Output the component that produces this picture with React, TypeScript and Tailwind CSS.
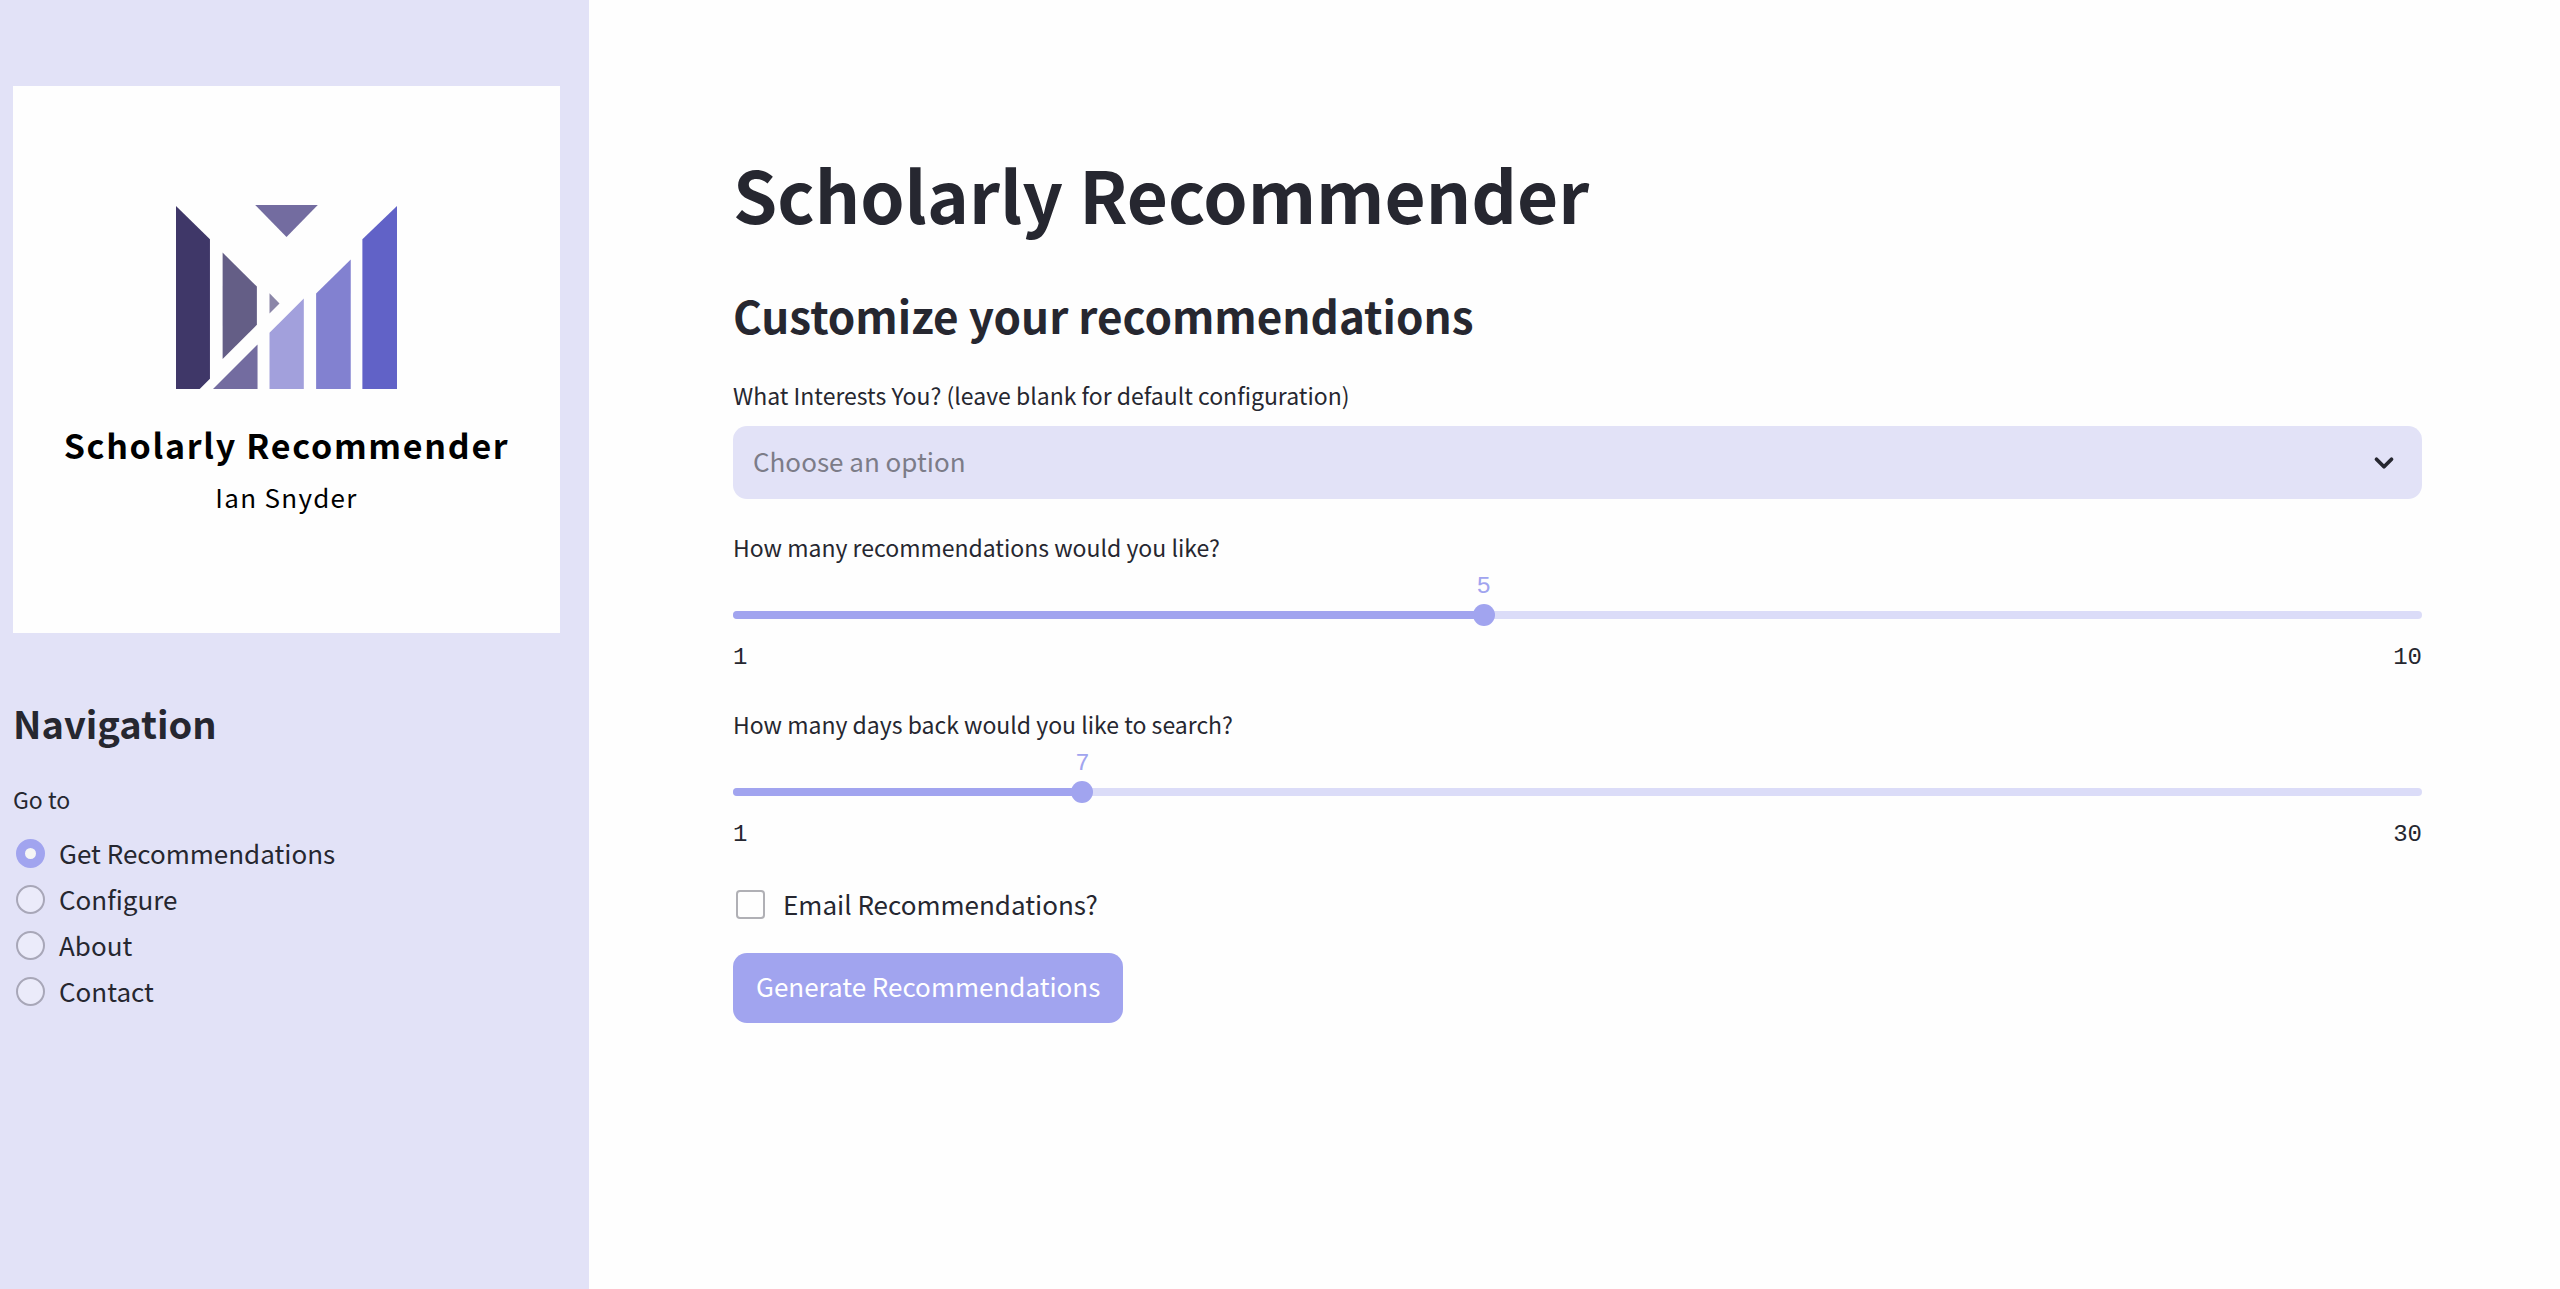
import { useState } from 'react';
import { Check, ChevronDown } from 'lucide-react';

const pages = ['Get Recommendations', 'Configure', 'About', 'Contact'];
const interests = ['Computer Science', 'Mathematics', 'Physics', 'Statistics'];

const Logo = () => (
    <div className="flex aspect-square flex-col items-center bg-[#fefefe] pt-[119px]">
        <svg viewBox="47 45 664 554" className="w-[221px]" role="img" aria-label="Logo">
            <polygon points="47,48 149,148 149,567 117,599 47,599" fill="#3f3768" />
            <polygon points="285,45 473,45 379,141" fill="#736ca0" />
            <polygon points="187,188 290,290 290,405 187,508" fill="#645e86" />
            <polygon points="328,310 358,341 328,371" fill="#8b86a8" />
            <polygon points="157,599 292,464 292,599" fill="#736ca0" />
            <polygon points="328,429 431,326 431,599 328,599" fill="#a2a0dc" />
            <polygon points="468,311 572,209 572,599 468,599" fill="#8281d0" />
            <polygon points="607,148 711,48 711,599 607,599" fill="#6162c7" />
        </svg>
        <p className="mt-8 text-[34px] leading-[48px] font-bold tracking-wider whitespace-nowrap text-black">
            Scholarly Recommender
        </p>
        <p className="mt-1 text-[26px] leading-[48px] tracking-wider text-black">Ian Snyder</p>
    </div>
);

type SliderFieldProps = {
    id: string;
    label: string;
    min: number;
    max: number;
    initial: number;
};

const SliderField = ({ id, label, min, max, initial }: SliderFieldProps) => {
    const [value, setValue] = useState(initial);
    const percent = `${((value - min) / (max - min)) * 100}%`;

    return (
        <div className="flex flex-col">
            <label htmlFor={id} className="text-[23px] leading-8">{label}</label>
            <div className="mt-2 flex font-['Liberation_Mono',monospace] text-2xl leading-8 text-[#a1a4ef]">
                <div style={{ width: percent }} />
                <output htmlFor={id} className="-translate-x-1/2">{value}</output>
            </div>
            <div className="relative mt-px flex h-[22px] items-center">
                <div className="h-2 w-full overflow-hidden rounded-full bg-[#dbdcf8]">
                    <div className="h-full bg-[#a1a4ef]" style={{ width: percent }} />
                </div>
                {/* the input is one thumb wider than the track so the thumb centre sits on the value */}
                <input
                    id={id}
                    type="range"
                    min={min}
                    max={max}
                    value={value}
                    onChange={(e) => setValue(Number(e.target.value))}
                    className="absolute inset-y-0 -left-[11px] m-0 w-[calc(100%+22px)] cursor-pointer appearance-none bg-transparent [&::-webkit-slider-thumb]:size-[22px] [&::-webkit-slider-thumb]:appearance-none [&::-webkit-slider-thumb]:rounded-full [&::-webkit-slider-thumb]:bg-[#a1a4ef]"
                />
            </div>
            <div className="mt-4 flex justify-between font-['Liberation_Mono',monospace] text-2xl leading-8">
                <span>{min}</span>
                <span>{max}</span>
            </div>
        </div>
    );
};

export default function App() {
    const [page, setPage] = useState(pages[0]);
    const [interest, setInterest] = useState('');
    const [sendEmail, setSendEmail] = useState(false);

    return (
        <div className="flex min-h-screen bg-[#fefefe] font-['Noto_Sans_CJK_SC',sans-serif] text-[#262730]">
            <aside className="w-[589px] shrink-0 bg-[#e2e2f7] pt-[86px] pr-[29px] pl-[13px]">
                <Logo />
                <h2 className="mt-[62px] text-[38px] leading-[56px] font-bold">Navigation</h2>
                <fieldset className="mt-8">
                    <legend className="text-[23px] leading-8">Go to</legend>
                    <div className="mt-[15px] flex flex-col">
                        {pages.map((name) => (
                            <label key={name} className="flex h-[46px] items-center gap-[14px] pl-[3px] text-[26px] leading-8">
                                <input
                                    type="radio"
                                    name="page"
                                    checked={page === name}
                                    onChange={() => setPage(name)}
                                    className="size-[29px] shrink-0 appearance-none rounded-full border-2 border-[#a8a7b8] bg-[#ebebfa] checked:border-9 checked:border-[#a1a4ef] checked:bg-[#f5f5f5]"
                                />
                                {name}
                            </label>
                        ))}
                    </div>
                </fieldset>
            </aside>

            <main className="flex min-w-0 flex-1 flex-col pt-[149px] pr-[138px] pl-36">
                <h1 className="text-[71px] leading-[88px] font-bold">Scholarly Recommender</h1>
                <h2 className="mt-[50px] text-[44px] leading-[56px] font-bold">Customize your recommendations</h2>

                <label htmlFor="interests" className="mt-9 text-[23px] leading-8">
                    What Interests You? (leave blank for default configuration)
                </label>
                <div className="relative mt-[15px]">
                    <select
                        id="interests"
                        value={interest}
                        onChange={(e) => setInterest(e.target.value)}
                        className="block h-[73px] w-full appearance-none rounded-[14px] bg-[#e2e2f7] px-5 pb-1 text-[26px] text-[#7c7c88]"
                    >
                        <option value="">Choose an option</option>
                        {interests.map((name) => (
                            <option key={name}>{name}</option>
                        ))}
                    </select>
                    <ChevronDown className="pointer-events-none absolute top-1/2 right-[23px] size-[30px] -translate-y-1/2" strokeWidth={3} />
                </div>

                <div className="mt-8 flex flex-col gap-[34px]">
                    <SliderField id="count" label="How many recommendations would you like?" min={1} max={10} initial={5} />
                    <SliderField id="days" label="How many days back would you like to search?" min={1} max={30} initial={7} />
                </div>

                <label className="mt-[37px] flex items-center gap-[18px] pl-[3px] text-[26px] leading-8">
                    <span className="relative flex">
                        <input
                            type="checkbox"
                            checked={sendEmail}
                            onChange={(e) => setSendEmail(e.target.checked)}
                            className="peer size-[29px] appearance-none rounded-sm border-2 border-[#b0b0b5] checked:border-[#a1a4ef] checked:bg-[#a1a4ef]"
                        />
                        <Check className="pointer-events-none absolute inset-0 m-auto hidden size-5 text-white peer-checked:block" strokeWidth={3} />
                    </span>
                    Email Recommendations?
                </label>

                <button type="button" className="mt-[33px] h-[70px] self-start rounded-[14px] bg-[#a1a4ef] px-[23px] pb-1 text-[26px] leading-8 text-white">
                    Generate Recommendations
                </button>
            </main>
        </div>
    );
}
